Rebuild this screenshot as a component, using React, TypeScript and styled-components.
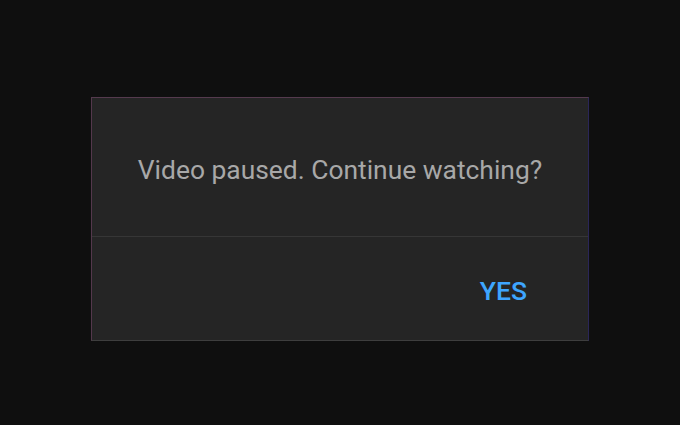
import React from "react";
import styled, { createGlobalStyle } from "styled-components";

const Global = createGlobalStyle`
  html, body { margin: 0; padding: 0; background: #0f0f0f; }
  body { font-family: Roboto, "Noto Sans", Arial, sans-serif; }
`;

const Page = styled.div`
  width: 680px;
  height: 425px;
  background: #0f0f0f;
  display: flex;
  justify-content: center;
  padding-top: 97px;
  box-sizing: border-box;
`;

const Dialog = styled.div`
  width: 498px;
  height: 244px;
  box-sizing: border-box;
  background: #252525;
  border: 1px solid;
  border-color: #553a4e #2a2658 #3e3e3e #54384c;
  display: flex;
  flex-direction: column;
`;

const Body = styled.div`
  height: 139px;
  display: flex;
  align-items: center;
  justify-content: center;
  border-bottom: 1px solid #363636;
  padding-top: 6px;
  box-sizing: border-box;
`;

const Message = styled.p`
  margin: 0;
  font-size: 26.4px;
  color: #a8a8a8;
  font-weight: 400;
`;

const Actions = styled.div`
  flex: 1;
  display: flex;
  align-items: center;
  justify-content: flex-end;
  padding-right: 61px;
  padding-top: 3px;
`;

const Button = styled.button`
  background: none;
  border: none;
  padding: 0;
  font-family: inherit;
  font-size: 26.5px;
  font-weight: 500;
  color: #3ea6ff;
  cursor: pointer;
`;

export default function App() {
  return (
    <>
      <Global />
      <Page>
        <Dialog>
          <Body>
            <Message>Video paused. Continue watching?</Message>
          </Body>
          <Actions>
            <Button>YES</Button>
          </Actions>
        </Dialog>
      </Page>
    </>
  );
}
